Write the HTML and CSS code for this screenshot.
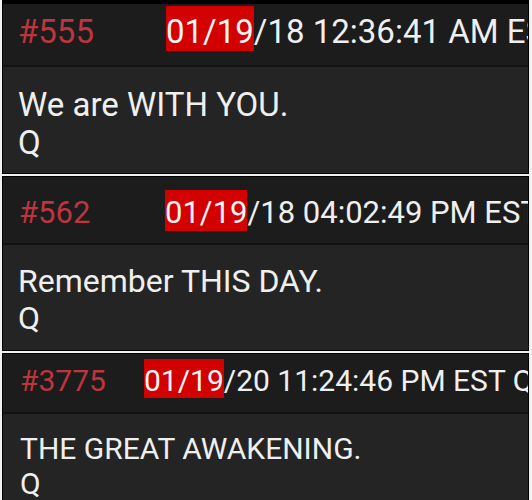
FILE: index.html
```html
<!DOCTYPE html>
<html lang="en">
<head>
    <meta charset="UTF-8">
    <meta name="viewport" content="width=device-width, initial-scale=1.0">
    <title>Drops</title>
    <link rel="stylesheet" href="styles.css">
</head>
<body>

<div class="feed">
    <article class="post post--one">
        <header class="post-head">
            <span class="post-id">#555</span><span class="post-time"><mark class="hit">01/19</mark>/18 12:36:41 AM EST</span>
        </header>
        <div class="post-body">We are WITH YOU.<br>Q</div>
    </article>

    <article class="post post--two">
        <header class="post-head">
            <span class="post-id">#562</span><span class="post-time"><mark class="hit">01/19</mark>/18 04:02:49 PM EST</span>
        </header>
        <div class="post-body">Remember THIS DAY.<br>Q</div>
    </article>

    <article class="post post--three">
        <header class="post-head">
            <span class="post-id">#3775</span><span class="post-time"><mark class="hit">01/19</mark>/20 11:24:46 PM EST Q</span>
        </header>
        <div class="post-body">THE GREAT AWAKENING.<br>Q</div>
    </article>
</div>

</body>
</html>
```

FILE: styles.css
```css
* {
    box-sizing: border-box;
}
html, body {
    margin: 0;
    height: 100%;
    overflow: hidden;
    background: #f1f1f1;
}
.feed {
    display: flex;
    flex-direction: column;
    gap: 2px;
    padding: 0 3px 0 2px;
    font-family: Roboto, "Liberation Sans", sans-serif;
}
.post {
    border: 1px solid #000;
    background: #242424;
    overflow: hidden;
}
.post-head {
    background: #1c1c1c;
    border-bottom: 2px solid #121212;
    white-space: nowrap;
    overflow: hidden;
    color: #efefef;
}
.post-id {
    display: inline-block;
    color: #bd353e;
}
.hit {
    display: inline-block;
    background: #d30000;
    color: #f4f4f4;
}
.post-body {
    color: #efefef;
}

/* each card came from a different capture, so the scale differs a little */
.post--one {
    border-top-width: 4px;
}
.post--one .post-head {
    height: 63px;
    padding: 2px 0 0 15px;
    font-size: 33px;
}
.post--one .post-id {
    width: 148px;
}
.post--one .hit {
    padding-top: 6px;
}
.post--one .post-body {
    height: 106px;
    padding: 19px 0 0 15px;
    font-size: 33px;
    line-height: 38px;
}

.post--two .post-head {
    height: 68px;
    padding: 13px 0 0 16px;
    font-size: 31px;
}
.post--two .post-id {
    width: 146px;
}
.post--two .hit {
    padding-top: 4px;
}
.post--two .post-body {
    height: 105px;
    padding: 18px 0 0 15px;
    font-size: 32px;
    line-height: 37px;
}

.post--three .post-head {
    height: 60px;
    padding: 5px 0 0 17px;
    font-size: 30px;
}
.post--three .post-id {
    width: 124px;
}
.post--three .hit {
    padding-top: 4px;
}
.post--three .post-body {
    height: 90px;
    padding: 17px 0 0 17px;
    font-size: 30px;
    line-height: 35px;
}
```
